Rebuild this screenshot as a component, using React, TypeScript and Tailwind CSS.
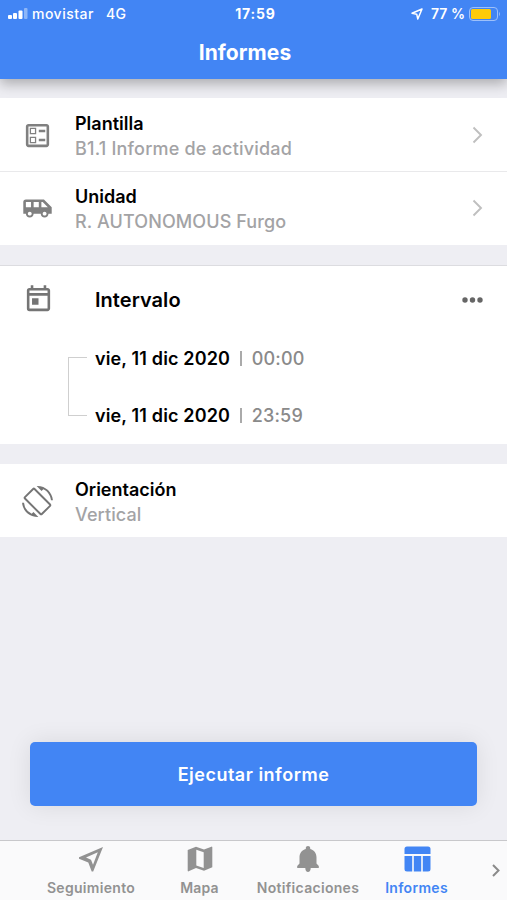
import type { ReactNode } from 'react'
import { MdAirportShuttle, MdOutlineBallot, MdOutlineToday, MdScreenRotation } from 'react-icons/md'

export default function App() {
    return (
        <div className="flex flex-col w-full h-[900px] overflow-hidden bg-[#eeeef3] font-['Inter',sans-serif] text-black">
            <Header />
            <main className="flex flex-col flex-1">
                {/* template and unit */}
                <section className="flex flex-col mt-[19px] pb-px bg-white">
                    <Row icon={<MdOutlineBallot size={31} color="#808080" />} title="Plantilla" value="B1.1 Informe de actividad" valueClass="tracking-[0.2px]" arrow />
                    <div className="h-px -mb-px bg-[#e9e9eb]" />
                    <Row icon={<MdAirportShuttle size={31} color="#808080" />} title="Unidad" value="R. AUTONOMOUS Furgo" valueClass="tracking-[0.1px]" arrow />
                </section>

                {/* interval */}
                <section className="flex flex-col mt-5 h-[179px] border-t border-[#dcdce0] bg-white">
                    <div className="flex items-center h-[67px]">
                        <div className="flex justify-center w-[77px]">
                            <MdOutlineToday size={31} color="#757575" />
                        </div>
                        <h2 className="flex-1 ml-[18px] text-[20px] leading-6 font-semibold tracking-[0.05px]">Intervalo</h2>
                        <svg className="mr-6" width="21" height="6" viewBox="0 0 21 6" fill="#666">
                            <circle cx="3" cy="3" r="2.7" />
                            <circle cx="10.5" cy="3" r="2.7" />
                            <circle cx="18" cy="3" r="2.7" />
                        </svg>
                    </div>
                    <div className="flex mt-[14px] ml-[68px]">
                        <div className="w-[19px] h-[59px] mt-[10px] border-y-[1.5px] border-l-[1.5px] border-[#cfcfcf]" />
                        <div className="flex flex-col gap-[33px] ml-2">
                            {dates.map((d) => (
                                <DateLine key={d.time} date={d.date} time={d.time} />
                            ))}
                        </div>
                    </div>
                </section>

                {/* orientation */}
                <section className="flex mt-5 bg-white">
                    <Row icon={<MdScreenRotation size={31} color="#757575" />} title="Orientación" value="Vertical" valueClass="tracking-[0.1px]" />
                </section>

                <button className="mt-auto mb-[34px] mx-[30px] h-16 rounded-[5px] bg-[#4285f4] text-white text-[18px] font-semibold tracking-[0.5px] shadow-[0_0_24px_rgba(0,0,0,0.09)]">
                    Ejecutar informe
                </button>
            </main>
            <TabBar />
        </div>
    )
}

const dates = [
    { date: "vie, 11 dic 2020", time: "00:00" },
    { date: "vie, 11 dic 2020", time: "23:59" },
]

const Header = () => {
    return (
        <header className="h-[79px] shrink-0 bg-[#4285f4] text-white shadow-[0_5px_12px_rgba(0,0,0,0.28)]">
            {/* status bar */}
            <div className="grid grid-cols-3 items-center h-7 pl-2 pr-[7px] text-[14px] leading-5">
                <div className="flex items-center font-medium">
                    <svg width="20" height="12" viewBox="0 0 20 12" fill="#fff">
                        <rect x="0" y="7" width="4" height="4" rx="1" />
                        <rect x="5" y="5" width="4" height="6" rx="1" />
                        <rect x="10.5" y="2.5" width="4" height="8.5" rx="1" />
                        <rect x="16" y="0" width="3.5" height="11" rx="1" opacity=".4" />
                    </svg>
                    <span className="ml-1 tracking-[0.5px]">movistar</span>
                    <span className="ml-3 tracking-[0.3px]">4G</span>
                </div>
                <span className="pl-[3px] text-center font-bold tracking-[0.8px]">17:59</span>
                <div className="flex items-center justify-end font-semibold">
                    <svg className="mr-2" width="12" height="12" viewBox="0 0 12 12" fill="none" stroke="#fff" strokeWidth="1.5" strokeLinejoin="round">
                        <path d="M11 1 1 5.3l4.7.9L6.8 11z" />
                    </svg>
                    <span>77 %</span>
                    <svg className="ml-1" width="31" height="14" viewBox="0 0 31 14" fill="none">
                        <rect x=".5" y=".5" width="28" height="13" rx="3.5" stroke="#9dc0fa" />
                        <rect x="2" y="2" width="20" height="10" rx="1.5" fill="#fecb09" />
                        <path d="M30 5c1.2.8 1.2 3.2 0 4z" fill="#9dc0fa" />
                    </svg>
                </div>
            </div>
            <h1 className="mt-3 ml-[-17px] text-center text-[21px] leading-[26px] font-bold tracking-[0.1px]">Informes</h1>
        </header>
    )
}

interface rowProps {
    icon: ReactNode,
    title: string,
    value: string,
    valueClass: string,
    arrow?: boolean,
}
const Row = ({ icon, title, value, valueClass, arrow }: rowProps) => {
    return (
        <div className="flex w-full items-center h-[73px]">
            <div className="flex justify-center w-[75px] pt-[2px]">{icon}</div>
            <div className="flex flex-1 flex-col pt-[3px]">
                <span className="text-[18px] leading-6 font-semibold">{title}</span>
                <span className={"text-[18px] leading-[25px] font-medium text-[#a3a3a5] " + valueClass}>{value}</span>
            </div>
            {arrow && (
                <svg className="mr-6" width="11" height="18" viewBox="0 0 11 18" fill="none" stroke="#bfbfbf" strokeWidth="1.9">
                    <path d="m1.5 1.5 7.5 7.5-7.5 7.5" />
                </svg>
            )}
        </div>
    )
}

const DateLine = ({ date, time }: { date: string, time: string }) => {
    return (
        <div className="flex items-center h-6 text-[18px] leading-6">
            <span className="font-semibold tracking-[0.15px]">{date}</span>
            <span className="w-[1.5px] h-[15px] mx-[10px] -mt-[2px] bg-[#aaa]" />
            <span className="font-medium tracking-[0.2px] text-[#8a8a8a]">{time}</span>
        </div>
    )
}

interface tabProps {
    icon: ReactNode,
    label: string,
    box: string,
}
const TabBar = () => {
    return (
        <nav className="flex h-[60px] shrink-0 pl-9 border-t border-[#c8c8cb] bg-[#fafafb] text-[#929292]">
            {tabs.map((t) => (
                <div key={t.label} className={"flex flex-col items-center shrink-0 pt-1 text-[14px] leading-[18px] font-semibold " + t.box}>
                    <div className="flex items-center h-7">{t.icon}</div>
                    <span className="mt-[6px] whitespace-nowrap">{t.label}</span>
                </div>
            ))}
            <svg className="mt-[22px] ml-[21px] shrink-0" width="10" height="15" viewBox="0 0 10 15" fill="none" stroke="#8a8a8a" strokeWidth="2">
                <path d="m2 2 5.5 5.5L2 13" />
            </svg>
        </nav>
    )
}

const tabs: tabProps[] = [
    {
        label: "Seguimiento",
        box: "w-[110px] tracking-[0.3px]",
        icon: (
            <svg width="26" height="26" viewBox="0 0 26 26">
                <path fill="#929292" fillRule="evenodd" d="M25 1 15.2 25.5h-1.5L10.3 16.5 1 12.8v-1.5zM19.8 6.2 8 11.5l5 2.2 2 5z" />
            </svg>
        ),
    },
    {
        label: "Mapa",
        box: "w-[107px] tracking-[0.2px]",
        icon: (
            <svg width="26" height="26" viewBox="0 0 26 26">
                <path fill="#929292" fillRule="evenodd" d="m9 .7 8 2.8L24.4.7a.6.6 0 0 1 .9.6v19.9l-8.3 3.6L9 22 1.6 25.3a.6.6 0 0 1-.9-.6V4zm.3 3v15.7l7.4 2.6V6.3z" />
            </svg>
        ),
    },
    {
        label: "Notificaciones",
        box: "w-[110px] tracking-[0.3px]",
        icon: (
            <svg width="22" height="26" viewBox="0 0 22 26" fill="#929292">
                <path d="M11 0c1.3 0 2.2.9 2.2 2.1v.8c4 .9 6.3 4.4 6.3 8.5v6.1l2.3 2.4V22H.2v-2.1l2.3-2.4v-6.1C2.5 7.3 4.8 3.8 8.8 2.9v-.8C8.8.9 9.7 0 11 0zM8.3 22h5.4c0 2.4-1.2 4-2.7 4s-2.7-1.6-2.7-4z" />
            </svg>
        ),
    },
    {
        label: "Informes",
        box: "w-[107px] text-[#4285f4] tracking-[0.3px]",
        icon: (
            <svg className="ml-px" width="27" height="26" viewBox="0 0 27 26" fill="#4285f4">
                <path d="M3 .5h21A2.5 2.5 0 0 1 26.5 3v5H.5V3A2.5 2.5 0 0 1 3 .5zM.5 10h7.7v15.5H3A2.5 2.5 0 0 1 .5 23zM9.8 10h7.4v15.5H9.8zM18.8 10h7.7v13a2.5 2.5 0 0 1-2.5 2.5h-5.2z" />
            </svg>
        ),
    },
]
